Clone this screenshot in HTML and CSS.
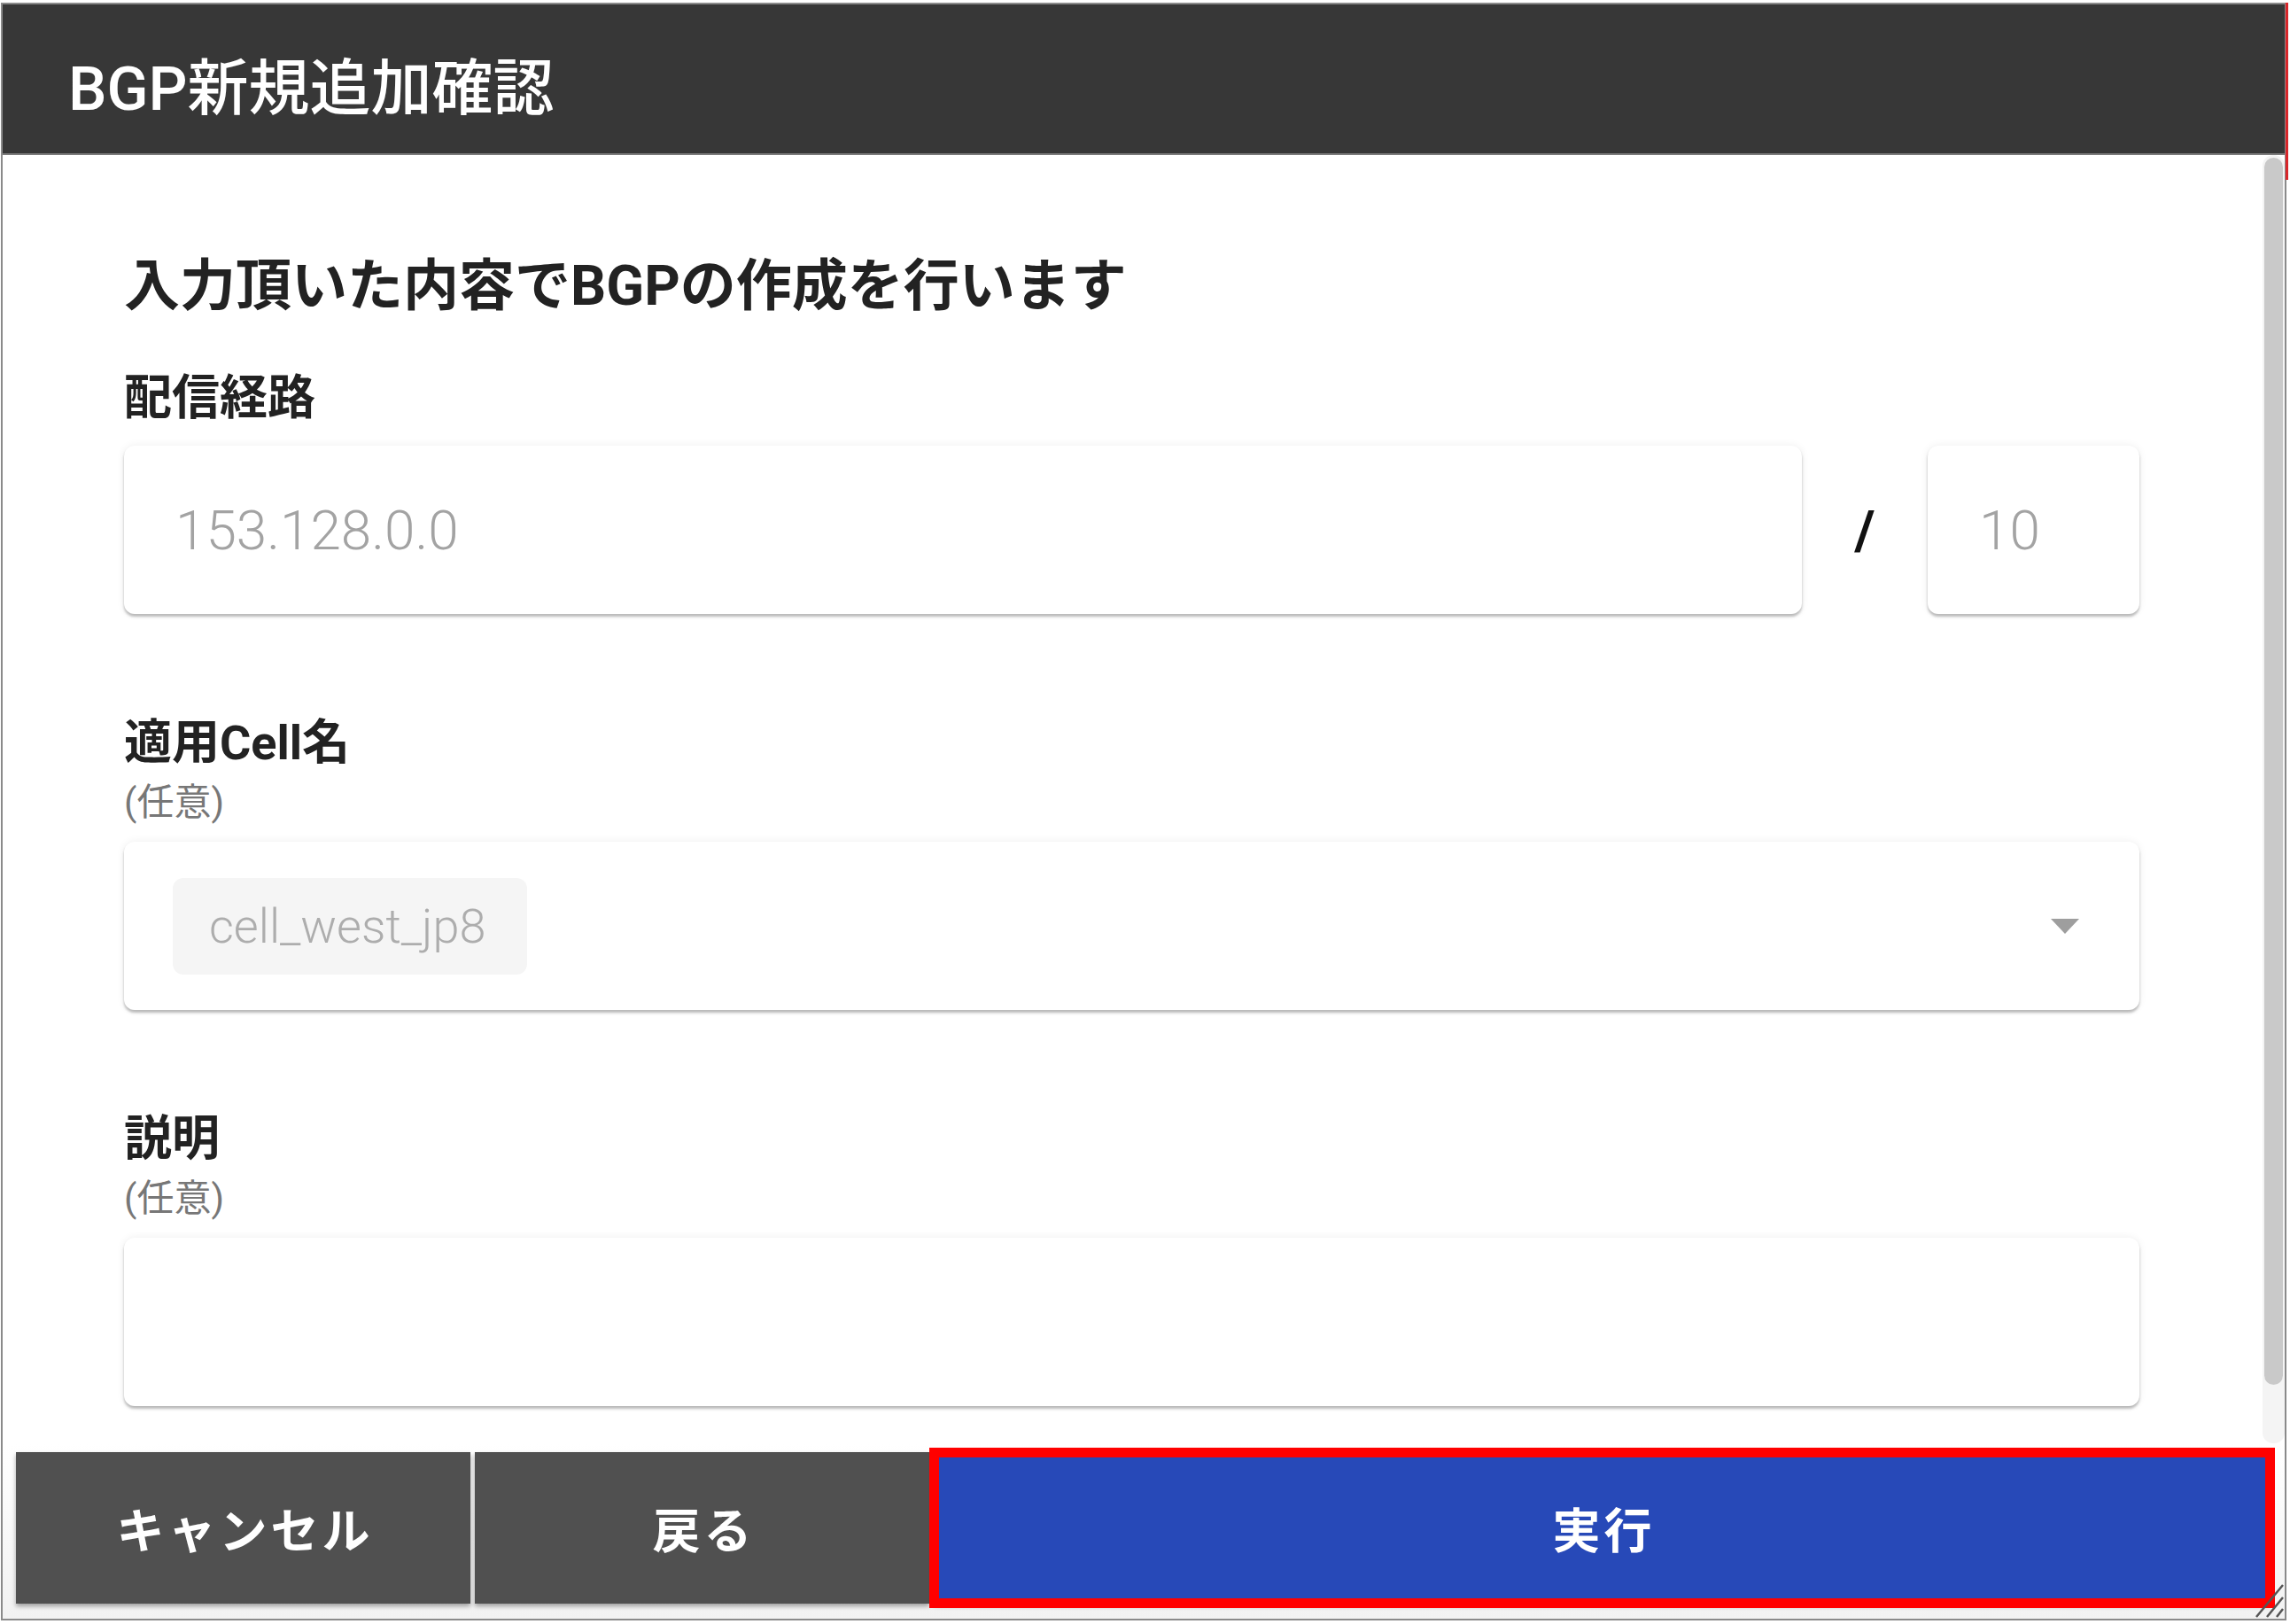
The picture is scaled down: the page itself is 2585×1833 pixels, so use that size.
FILE: index.html
```html
<!DOCTYPE html>
<html lang="ja">
<head>
  <meta charset="UTF-8">
  <title>BGP新規追加確認</title>
  <link rel="stylesheet" href="styles.css">
</head>
<body>
  <div class="dialog">
    <header class="dialog-header">
      <h1 class="dialog-title">BGP新規追加確認</h1>
    </header>

    <div class="dialog-body">
      <form class="bgp-form" onsubmit="return false">
        <p class="lead">入力頂いた内容でBGPの作成を行います</p>

        <div class="field field-first">
          <div class="field-label">配信経路</div>
          <div class="field-control route-row">
            <input class="box box-address" type="text" value="153.128.0.0" readonly>
            <span class="route-slash">/</span>
            <input class="box box-prefix" type="text" value="10" readonly>
          </div>
        </div>

        <div class="field">
          <div class="field-label">適用Cell名</div>
          <div class="field-note">(任意)</div>
          <div class="field-control box select-box">
            <span class="chip">cell_west_jp8</span>
            <span class="select-arrow"></span>
          </div>
        </div>

        <div class="field">
          <div class="field-label">説明</div>
          <div class="field-note">(任意)</div>
          <textarea class="field-control box box-text" readonly></textarea>
        </div>
      </form>

      <!-- scroll bar of the dialog body -->
      <div class="scroll-track">
        <div class="scroll-thumb"></div>
      </div>
    </div>

    <footer class="dialog-actions">
      <button type="button" class="btn">キャンセル</button>
      <button type="button" class="btn">戻る</button>
      <button type="button" class="btn btn-run">実行</button>

      <svg class="resize-grip" width="40" height="48" viewBox="0 0 40 48">
        <path d="M8 46 L38 10 M20 46 L38 24 M31 46 L38 37" stroke="#555" stroke-width="2.5" fill="none"/>
      </svg>
    </footer>
  </div>
</body>
</html>
```

FILE: styles.css
```css
body {
  margin: 0;
  background-color: #fff;
  font-family: Roboto, "Noto Sans CJK JP", sans-serif;
  color: #222;
}

.dialog {
  position: relative;
  margin: 3px 0 0 1px;
  width: 2580px;
  height: 1826px;
  box-sizing: border-box;
  border: 2px solid #8a8a8a;
  display: flex;
  flex-direction: column;
  background-color: #fff;
}

/* red marker line sitting on the right edge of the window */
.dialog::after {
  content: "";
  position: absolute;
  top: -2px;
  right: -4px;
  width: 3px;
  height: 200px;
  background-color: #d8262a;
}

.dialog-header {
  flex: none;
  height: 170px;
  box-sizing: border-box;
  padding: 10px 0 0 74px;
  display: flex;
  align-items: center;
  background-color: #373737;
  border-bottom: 2px solid #7b7b7b;
}

.dialog-title {
  margin: 0;
  color: #fff;
  font-size: 69px;
  font-weight: 500;
}

.dialog-body {
  flex: 1;
  min-height: 0;
  display: flex;
  overflow: hidden;
}

.bgp-form {
  flex: 1;
  padding: 105px 139px 110px 137px;
}

.scroll-track {
  flex: none;
  width: 25px;
  border-radius: 12px;
  background-color: #f4f4f4;
}

.scroll-thumb {
  height: 1385px;
  margin: 3px 2px 0;
  border-radius: 11px;
  background-color: #c9c9c9;
}

.lead {
  margin: 0;
  font-size: 63px;
  line-height: 86px;
  font-weight: 700;
}

.field {
  margin-top: 111px;
}

.field-first {
  margin-top: 49px;
}

.field-label {
  font-size: 54px;
  line-height: 70px;
  font-weight: 700;
}

.field-note {
  margin-top: 6px;
  font-size: 42px;
  line-height: 52px;
  color: #777;
}

.field-control {
  margin-top: 18px;
}

.box {
  display: block;
  height: 190px;
  box-sizing: border-box;
  border: none;
  border-radius: 12px;
  background-color: #fff;
  box-shadow: 0 3px 3px rgba(0, 0, 0, 0.25), 0 0 10px rgba(0, 0, 0, 0.07);
  outline: none;
}

.route-row {
  display: flex;
  align-items: center;
}

input.box {
  padding: 0 0 0 58px;
  font-family: Roboto, sans-serif;
  font-size: 62px;
  font-weight: 300;
  color: #a3a3a3;
}

.box-address {
  flex: 1;
  min-width: 0;
}

.route-slash {
  flex: none;
  width: 142px;
  text-align: center;
  font-size: 62px;
  font-weight: 700;
  color: #111;
}

.box-prefix {
  flex: none;
  width: 239px;
}

.select-box {
  display: flex;
  align-items: center;
  padding: 0 68px 0 55px;
}

.chip {
  display: flex;
  align-items: center;
  width: 400px;
  height: 109px;
  box-sizing: border-box;
  padding-left: 41px;
  border-radius: 12px;
  background-color: #f5f5f5;
  font-size: 54px;
  font-weight: 300;
  color: #adadad;
}

.select-arrow {
  margin-left: auto;
  width: 0;
  height: 0;
  border-left: 16px solid transparent;
  border-right: 16px solid transparent;
  border-top: 17px solid #9e9e9e;
}

.box-text {
  width: 100%;
  resize: none;
  font-family: inherit;
}

.dialog-actions {
  position: relative;
  flex: none;
  height: 198px;
  box-sizing: border-box;
  padding: 10px 16px 17px 15px;
  display: grid;
  grid-template-columns: 513px 513px 1fr;
  column-gap: 5px;
  background: linear-gradient(#fff, #f2f2f2);
}

.btn {
  border: none;
  padding: 0 0 0 4px;
  background-color: #505050;
  color: #fff;
  font-family: Roboto, "Noto Sans CJK JP", sans-serif;
  font-size: 54px;
  font-weight: 700;
  letter-spacing: 4px;
  box-shadow: 0 3px 5px rgba(0, 0, 0, 0.35);
  cursor: pointer;
}

.btn-run {
  background-color: #2749b8;
  outline: 11px solid #ff0000;
  outline-offset: -6px;
}

.resize-grip {
  position: absolute;
  right: 0;
  bottom: 0;
}
```
